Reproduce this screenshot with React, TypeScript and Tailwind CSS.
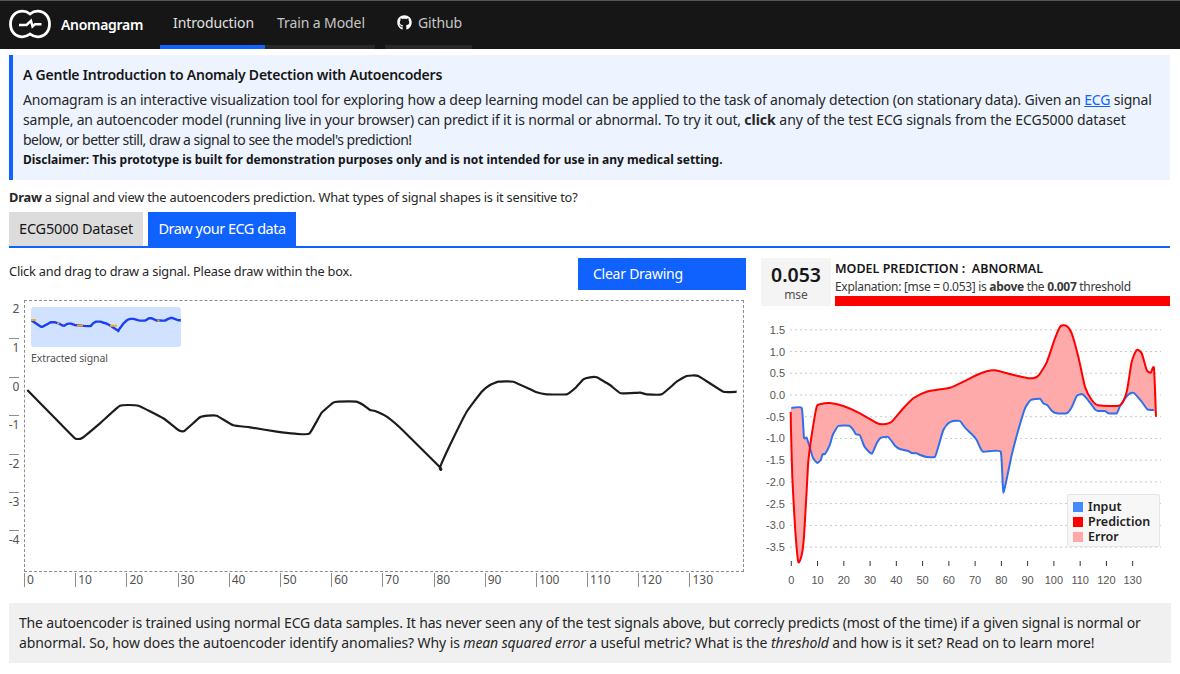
import { FaGithub } from "react-icons/fa"

const SANS = "font-['Noto_Sans','Liberation_Sans',sans-serif]"

// traced from the reference, in page pixels
const drawn: [number, number][] = [
  [27.3, 390], [60, 423.3], [75, 438.3], [81.7, 438.3], [100, 423.3], [120, 405.7], [138.3, 405.7], [163.3, 418.3],
  [178.3, 430], [184.3, 431], [200, 417.3], [208.3, 415.7], [216.7, 415.7], [233.3, 425.3], [250, 427.3], [276.7, 431.7],
  [295, 433.7], [309.3, 433.7], [321.7, 412.7], [333.3, 402.7], [338.3, 401.7], [356, 401.7], [363.3, 405], [370, 410],
  [375, 411], [386.7, 416.7], [401.7, 429.3], [440, 467.3], [440.7, 470], [440, 467.3], [450, 445], [466.7, 411.7],
  [481.7, 391.7], [490, 385], [498.3, 381.7], [513.3, 381.7], [536.7, 392.3], [546.7, 394.3], [566.7, 394.3], [575, 388.3],
  [583.3, 379.3], [590, 377.3], [596.7, 377.3], [610, 385], [620.7, 393.3], [640, 392.7], [646.7, 394.3], [661.7, 394.3],
  [676.7, 381.7], [686.7, 376], [698.3, 376], [723.3, 391.7], [736.7, 391.7],
]

const input: [number, number][] = [
  [791.3, 408], [801.7, 408], [804, 437.7], [806.7, 437.7], [810, 448], [813, 458], [817.3, 463], [820.7, 460],
  [822.7, 454], [825, 454], [830, 444.3], [832.7, 435], [838.3, 426], [849.3, 425.7], [853.3, 430], [856, 434.3],
  [860, 435.3], [864, 445.7], [867.3, 450], [872, 453.7], [876.7, 443.3], [881, 437.7], [888.3, 437], [895, 445.7],
  [900, 449], [908.3, 451], [911.7, 453], [916.7, 453.3], [920, 455], [926.7, 457], [935, 456.7], [938.3, 446.7],
  [943.3, 430], [948.3, 423.3], [953.3, 421], [960, 421], [965, 427.7], [973.3, 435.7], [976.7, 440], [982.7, 451.7],
  [1000.7, 451.7], [1003.3, 492.7], [1011.7, 455], [1018.3, 430], [1025, 408.3], [1030.7, 400], [1040, 398.7],
  [1043.3, 403.3], [1047.3, 405], [1051.7, 410.7], [1056.7, 413.3], [1066.7, 413.3], [1071.7, 407.3], [1076.7, 396],
  [1081.7, 394], [1086.7, 398.3], [1095, 409.3], [1098.3, 411], [1105, 411], [1108.3, 413.3], [1116.7, 413.3], [1120, 406],
  [1125, 398.3], [1130, 393.3], [1134, 393], [1141.7, 401.7], [1147.3, 409.3], [1154, 410],
]

const prediction: [number, number][] = [
  [790.7, 412], [791, 430], [792.3, 476.7], [795, 526.7], [798.3, 561.7], [801.7, 555], [804, 536.7], [806.7, 490],
  [808.3, 461.7], [811.7, 435], [816.7, 406.7], [820, 404.3], [830, 403], [843.3, 406], [860, 413.3], [876.7, 423],
  [883.3, 424.3], [891.7, 421.7], [903.3, 408.3], [913.3, 398.3], [926.7, 391.7], [950, 387.7], [963.3, 381.7],
  [976.7, 375], [986.7, 371.3], [995, 370.3], [1005, 372.7], [1016.7, 375.7], [1030, 378.3], [1038.3, 375.7],
  [1046.7, 362.3], [1055, 338.3], [1060.7, 326], [1066.7, 326], [1071.7, 333.3], [1078.3, 356.7], [1085, 386.7],
  [1091.7, 400], [1098.3, 405.3], [1120, 405.3], [1126.7, 391.7], [1131.7, 361.7], [1136.7, 350], [1141.7, 353.3],
  [1146.7, 370], [1150.7, 372.7], [1154, 368.3], [1156, 416.7],
]

const pts = (list: [number, number][]) => list.map(([x, y]) => `${x},${y}`).join(" ")

// catmull-rom so the traced points read as a curve
const smooth = (list: [number, number][], k: number) => {
  let d = `M${list[0][0]} ${list[0][1]}`
  for (let i = 0; i < list.length - 1; i++) {
    const p0 = list[Math.max(i - 1, 0)]
    const p1 = list[i]
    const p2 = list[i + 1]
    const p3 = list[Math.min(i + 2, list.length - 1)]
    d += `C${p1[0] + (p2[0] - p0[0]) * k} ${p1[1] + (p2[1] - p0[1]) * k} ${p2[0] - (p3[0] - p1[0]) * k} ${p2[1] - (p3[1] - p1[1]) * k} ${p2[0]} ${p2[1]}`
  }
  return d
}

const mini: [number, number][] = drawn.map(([x, y]) => [31 + ((x - 27.3) * 150) / 710, 320 + (y - 390) * 0.14])

const yLabels = ["2", "1", "0", "-1", "-2", "-3", "-4"]
const xLabels = [0, 10, 20, 30, 40, 50, 60, 70, 80, 90, 100, 110, 120, 130]
const predY = ["1.5", "1.0", "0.5", "0.0", "-0.5", "-1.0", "-1.5", "-2.0", "-2.5", "-3.0", "-3.5"]

function Logo() {
  return (
    <svg width="44" height="30" viewBox="8 9 44 30" fill="none" stroke="white" className="shrink-0">
      <path
        d="M30 14C27.5 12 25 11.2 22.5 11.2C15.5 11.2 10.5 16.5 10.5 24C10.5 31.5 15.5 36.8 22.5 36.8C25 36.8 27.5 36 30 34C32.5 36 35 36.8 37.5 36.8C44.5 36.8 49.5 31.5 49.5 24C49.5 16.5 44.5 11.2 37.5 11.2C35 11.2 32.5 12 30 14Z"
        strokeWidth="2.8"
      />
      <path d="M19 25H26.5L31 20.8L32.5 26.5L35 24.3H41.5" strokeWidth="2.4" />
    </svg>
  )
}

function NavTab({ label, active, width, icon }: { label: string; active?: boolean; width: string; icon?: boolean }) {
  return (
    <div
      className={`${width} h-[48px] flex items-center justify-center gap-[6px] pl-[2px] pb-[1px] border-b-4 text-[14px] tracking-[-0.1px] ${
        active ? "border-[#0f62fe] text-[#e0e0e0]" : "border-[#282828] text-[#c6c6c6]"
      }`}
    >
      {icon && <FaGithub className="text-white text-[15px]" />}
      {label}
    </div>
  )
}

function DrawChart() {
  return (
    <div className="flex flex-col ml-[9px] h-[288px] mt-[10px]">
      <div className="flex">
        <div className="w-[10px] flex flex-col text-[12px] text-[#525252] leading-[14px]">
          {yLabels.map((l, i) => (
            <div key={l} className={`h-[38.4px] pt-[1px] flex flex-col items-end ${i > 0 ? "border-t border-[#8d8d8d]" : ""}`}>
              <span className="mt-[1px] tracking-tight">{l}</span>
            </div>
          ))}
        </div>
        <div className="relative ml-[5px] w-[720px] h-[272px] border border-dashed border-[#8d8d8d]">
          <svg className="absolute -left-[25px] -top-[301px]" width="1180" height="674" fill="none">
            <path d={smooth(drawn, 1 / 16)} stroke="#1c1c1c" strokeWidth="2.2" strokeLinejoin="round" />
          </svg>
          <div className="absolute left-[6px] top-[6px] w-[150px] h-[40px] bg-[#d0e2ff] rounded-[3px] overflow-hidden">
            <svg className="absolute -left-[31px] -top-[307px]" width="200" height="360" fill="none">
              <polyline points={pts(mini)} stroke="#1b3ff0" strokeWidth="2.4" strokeLinejoin="round" />
              <path
                d="M31 320H36M57.5 322.8L59 324M77 325.5H83M110 325.7H117M157.5 320.7H159.5"
                stroke="#f5a623"
                strokeWidth="2"
              />
            </svg>
          </div>
          <div className="absolute left-[6px] top-[50px] text-[10.5px] tracking-[-0.1px] leading-[14px] text-[#525252]">Extracted signal</div>
        </div>
      </div>
      <div className="flex ml-[15px] text-[12px] leading-[14px] text-[#525252] mt-[1px]">
        {xLabels.map((l) => (
          <div key={l} className="w-[51.2px] shrink-0 border-l border-[#8d8d8d] pl-[2px]">
            {l}
          </div>
        ))}
      </div>
    </div>
  )
}

function PredictionChart() {
  const font = "'Liberation Sans', Arial, sans-serif"
  return (
    <div className="relative h-[290px] mt-[6px]">
      <svg className="absolute left-0 top-0" width="419" height="290" viewBox="761 312 419 290" fill="none">
        {predY.map((l, i) => {
          const y = 329.8 + i * 21.73
          return (
            <g key={l}>
              <line x1="790" x2="1161" y1={y} y2={y} stroke="#c8c8c8" strokeDasharray="2 3" />
              <text x="785" y={y + 4} textAnchor="end" fontSize="11" fill="#555" fontFamily={font}>
                {l}
              </text>
            </g>
          )
        })}
        {xLabels.map((l, i) => {
          const x = 791.3 + i * 26.26
          return (
            <g key={l}>
              <line x1={x} x2={x} y1="561" y2="566" stroke="#333" />
              <text x={x} y="584" textAnchor="middle" fontSize="11" fill="#555" fontFamily={font}>
                {l}
              </text>
            </g>
          )
        })}
        <polygon points={pts([...input, ...[...prediction].reverse()])} fill="#ffaaaa" />
        <path d={smooth(input, 1 / 14)} stroke="#2f6fed" strokeWidth="2" strokeLinejoin="round" />
        <path d={smooth(prediction, 1 / 10)} stroke="#ff0000" strokeWidth="2" strokeLinejoin="round" />
      </svg>
      <div className="absolute left-[306px] top-[182px] w-[93px] h-[53px] bg-[#f7f7f7] border border-[#e6e6e6] rounded-[2px] pl-[5px] pt-[4px] text-[12.5px] leading-[15px] font-semibold text-[#222]">
        <div className="flex items-center gap-[5px]">
          <span className="w-[10px] h-[10px] bg-[#4589ff]" />
          Input
        </div>
        <div className="flex items-center gap-[5px]">
          <span className="w-[10px] h-[10px] bg-[#ff0000]" />
          Prediction
        </div>
        <div className="flex items-center gap-[5px]">
          <span className="w-[10px] h-[10px] bg-[#ffa8a8]" />
          Error
        </div>
      </div>
    </div>
  )
}

export default function App() {
  return (
    <div className={`${SANS} w-[1180px] h-[674px] overflow-hidden bg-white text-[#161616]`}>
      {/* Header */}
      <div className="h-[49px] bg-[#161616] border-t border-[#555] flex items-start">
        <div className="ml-[8px] mt-[8px]">
          <Logo />
        </div>
        <div className="ml-[9px] w-[99px] h-[48px] flex items-center pb-[1px] text-white text-[14px] tracking-[-0.3px] font-semibold">Anomagram</div>
        <NavTab label="Introduction" width="w-[105px]" active />
        <NavTab label="Train a Model" width="w-[110px]" />
        <div className="w-[10px]" />
        <NavTab label="Github" width="w-[87px]" icon />
      </div>

      {/* Intro */}
      <div className="mt-[6px] mx-[9px] w-[1161px] h-[125px] bg-[#edf4ff] border-l-4 border-[#0f62fe] pl-[10px] pt-[10px]">
        <div className="text-[14px] leading-[20px] font-semibold tracking-[-0.23px]">A Gentle Introduction to Anomaly Detection with Autoencoders</div>
        <div className="mt-[5px] text-[14px] leading-[20px] text-[#262626] whitespace-nowrap">
          <span className="block tracking-[-0.18px]">
            Anomagram is an interactive visualization tool for exploring how a deep learning model can be applied to the task of anomaly detection (on stationary data). Given an{" "}
            <span className="text-[#0f62fe] underline">ECG</span> signal
          </span>
          <span className="block">
            <span className="tracking-[-0.19px]">sample, an autoencoder model (running live in your browser) can predict if it is normal or abnormal. To try it out, </span>
            <b>click</b>
            <span className="tracking-[-0.06px]"> any of the test ECG signals from the ECG5000 dataset</span>
          </span>
          <span className="block tracking-[-0.5px]">below, or better still, draw a signal to see the model's prediction!</span>
        </div>
        <div className="text-[12px] tracking-[-0.03px] leading-[20px] font-bold">Disclaimer: This prototype is built for demonstration purposes only and is not intended for use in any medical setting.</div>
      </div>

      <div className="ml-[9px] mt-[7px] text-[12.8px] tracking-[-0.2px] leading-[20px] text-[#262626]">
        <b>Draw</b> a signal and view the autoencoders prediction. What types of signal shapes is it sensitive to?
      </div>

      {/* Tabs */}
      <div className="mx-[9px] w-[1161px] mt-[5px] h-[36px] flex gap-[5px] border-b-2 border-[#0f62fe] text-[14.5px]">
        <div className="w-[134px] h-[34px] bg-[#dcdcdc] flex items-center justify-center tracking-[-0.2px]">ECG5000 Dataset</div>
        <div className="w-[148px] h-[34px] bg-[#0f62fe] text-white flex items-center justify-center tracking-[-0.5px]">Draw your ECG data</div>
      </div>

      {/* Draw + prediction */}
      <div className="flex mt-[10px] h-[345px]">
        <div className="w-[761px] shrink-0">
          <div className="flex h-[32px] ml-[9px] w-[737px]">
            <div className="text-[12.8px] tracking-[-0.2px] leading-[27px] text-[#262626] flex-1">Click and drag to draw a signal. Please draw within the box.</div>
            <div className="w-[168px] h-[32px] bg-[#0f62fe] text-white text-[14px] tracking-[-0.25px] pl-[15px] pb-[1px] flex items-center">Clear Drawing</div>
          </div>
          <DrawChart />
        </div>
        <div className="w-[419px] shrink-0">
          <div className="flex h-[48px] gap-[4px] w-[409px]">
            <div className="w-[70px] h-[48px] bg-[#f4f4f4] flex flex-col items-center pt-[4px]">
              <div className="text-[19.5px] leading-[26px] font-semibold">0.053</div>
              <div className="text-[12px] leading-[14px] text-[#525252]">mse</div>
            </div>
            <div className="flex-1 flex flex-col">
              <div className="text-[12.5px] leading-[20px] mt-[1px] font-semibold whitespace-pre">MODEL PREDICTION :  ABNORMAL</div>
              <div className="text-[12px] leading-[14px] mt-[1px] tracking-[-0.3px] text-[#393939]">
                Explanation: [mse = 0.053] is <b>above</b> the <b>0.007</b> threshold
              </div>
              <div className="h-[10px] bg-[#ff0000] mt-auto" />
            </div>
          </div>
          <PredictionChart />
        </div>
      </div>

      {/* Footer note */}
      <div className="mx-[9px] w-[1162px] h-[60px] bg-[#f0f0f0] px-[10px] py-[10px] text-[14px] leading-[20px] text-[#262626] whitespace-nowrap">
        <span className="block tracking-[-0.16px]">
          The autoencoder is trained using normal ECG data samples. It has never seen any of the test signals above, but correcly predicts (most of the time) if a given signal is normal or
        </span>
        <span className="block tracking-[-0.11px]">
          abnormal. So, how does the autoencoder identify anomalies? Why is <i>mean squared error</i> a useful metric? What is the <i>threshold</i> and how is it set? Read on to learn more!
        </span>
      </div>
    </div>
  )
}
